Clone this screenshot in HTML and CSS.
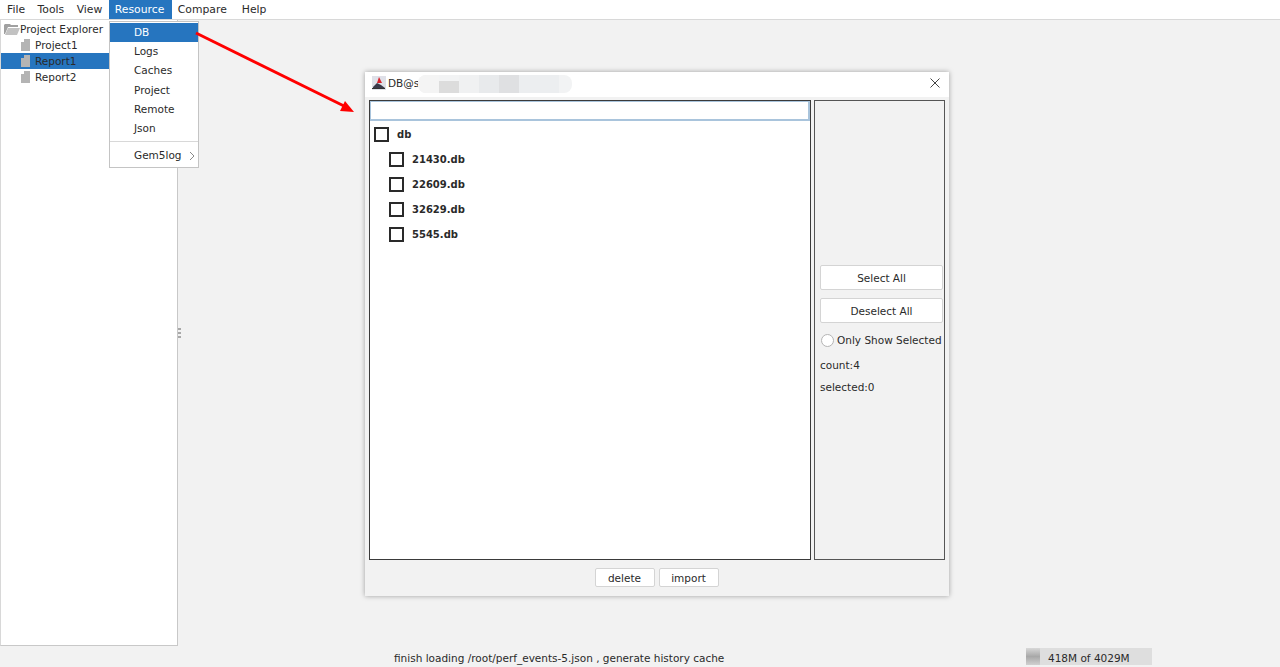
FILE: index.html
```html
<!DOCTYPE html>
<html lang="en">
<head>
    <meta charset="UTF-8">
    <title>Project Explorer</title>
    <link rel="stylesheet" href="styles.css">
</head>
<body>
<div class="menubar">
    <span class="menu-item">File</span>
    <span class="menu-item">Tools</span>
    <span class="menu-item">View</span>
    <span class="menu-item active">Resource</span>
    <span class="menu-item compare">Compare</span>
    <span class="menu-item">Help</span>
</div>

<div class="workspace">
    <div class="sidebar">
        <div class="tree-root">
            <svg class="folder-icon" width="16" height="11" viewBox="0 0 16 11"><path d="M0 1 L1 0 H6 L7 1 H14 V3 H4 L1 10 H0 Z" fill="#a0a0a0"/><path d="M4 4 H16 L13 11 H1 Z" fill="#c2c2c2"/></svg>
            <span>Project Explorer</span>
        </div>
        <div class="tree-item"><svg class="file-icon" width="9" height="12" viewBox="0 0 9 12"><path d="M3 0 H9 V12 H0 V3 H3 Z" fill="#b4b4b4"/></svg><span>Project1</span></div>
        <div class="tree-item selected"><svg class="file-icon" width="9" height="12" viewBox="0 0 9 12"><path d="M3 0 H9 V12 H0 V3 H3 Z" fill="#b4b4b4"/></svg><span>Report1</span></div>
        <div class="tree-item"><svg class="file-icon" width="9" height="12" viewBox="0 0 9 12"><path d="M3 0 H9 V12 H0 V3 H3 Z" fill="#b4b4b4"/></svg><span>Report2</span></div>
    </div>
    <div class="grip">
        <span class="grip-dot"></span>
        <span class="grip-dot"></span>
        <span class="grip-dot"></span>
    </div>
</div>

<div class="statusbar">
    <span class="status-text">finish loading /root/perf_events-5.json , generate history cache</span>
    <div class="memory">
        <span class="memory-used"></span>
        <span class="memory-text">418M of 4029M</span>
    </div>
</div>

<div class="dropdown">
    <div class="dropdown-item active">DB</div>
    <div class="dropdown-item">Logs</div>
    <div class="dropdown-item">Caches</div>
    <div class="dropdown-item">Project</div>
    <div class="dropdown-item">Remote</div>
    <div class="dropdown-item">Json</div>
    <div class="dropdown-sep"></div>
    <div class="dropdown-item submenu">
        <span>Gem5log</span>
        <svg width="6" height="10" viewBox="0 0 6 10"><path d="M1 1 L5 5 L1 9" fill="none" stroke="#8a8a8a" stroke-width="1"/></svg>
    </div>
</div>

<div class="window">
    <div class="titlebar">
        <svg class="app-icon" width="14" height="14" viewBox="0 0 14 14">
            <rect x="0" y="0" width="14" height="14" fill="#dfe0e8"/>
            <path d="M1 11 L5 7 L9 9 L13 12 L1 12 Z" fill="#3a3a4a"/>
            <path d="M7 1 L10 7 L5 7 Z" fill="#d8202a"/>
            <rect x="0" y="12" width="13" height="1" fill="#333"/>
        </svg>
        <span class="title-text">DB@s</span>
        <div class="blur-mask">
            <span class="blur-cell c1"></span>
            <span class="blur-cell c2"></span>
            <span class="blur-cell c3"></span>
            <span class="blur-cell c4"></span>
            <span class="blur-cell c5"></span>
            <span class="blur-cell c6"></span>
        </div>
        <svg class="close-icon" width="10" height="10" viewBox="0 0 10 10"><path d="M0.5 0.5 L9.5 9.5 M9.5 0.5 L0.5 9.5" stroke="#444" stroke-width="1" fill="none"/></svg>
    </div>
    <div class="window-body">
        <div class="panels">
            <div class="list-panel">
                <div class="search-box"></div>
                <div class="check-row root"><span class="checkbox"></span><span>db</span></div>
                <div class="check-row"><span class="checkbox"></span><span>21430.db</span></div>
                <div class="check-row"><span class="checkbox"></span><span>22609.db</span></div>
                <div class="check-row"><span class="checkbox"></span><span>32629.db</span></div>
                <div class="check-row"><span class="checkbox"></span><span>5545.db</span></div>
            </div>
            <div class="side-panel">
                <div class="btn side-btn">Select All</div>
                <div class="btn side-btn">Deselect All</div>
                <div class="radio-row"><span class="radio"></span><span>Only Show Selected</span></div>
                <div class="side-label">count:4</div>
                <div class="side-label">selected:0</div>
            </div>
        </div>
        <div class="actions">
            <div class="btn action-btn">delete</div>
            <div class="btn action-btn">import</div>
        </div>
    </div>
</div>

<svg class="arrow" width="170" height="90" viewBox="0 0 170 90">
    <line x1="2" y1="2" x2="150" y2="75" stroke="#ff0000" stroke-width="3"/>
    <polygon points="160,81 146,80 151,70" fill="#ff0000"/>
</svg>
</body>
</html>
```

FILE: styles.css
```css
* {
    box-sizing: border-box;
}
body {
    font-family: "DejaVu Sans", sans-serif;
    font-size: 10.5px;
    color: #2a2a2a;
    background-color: #f2f2f2;
    display: flex;
    flex-direction: column;
    height: 100vh;
    margin: 0;
    overflow: hidden;
}

.menubar {
    display: flex;
    height: 20px;
    flex-shrink: 0;
    background-color: #fff;
    border-bottom: 1px solid #d8d8d8;
    padding-left: 1px;
    font-size: 10.8px;
}
.menu-item {
    padding: 0 6.5px 0 6px;
    line-height: 19px;
    height: 19px;
}
.menu-item.active {
    padding-right: 7.5px;
    background-color: #2675bf;
    color: #fff;
}
.menu-item.compare {
    padding-right: 9px;
}

.workspace {
    flex: 1;
    display: flex;
    min-height: 0;
}
.sidebar {
    width: 178px;
    background-color: #fff;
    border-right: 1px solid #c8c8c8;
    border-bottom: 1px solid #c8c8c8;
    border-left: 1px solid #d8d8d8;
    padding-top: 1px;
}
.tree-root {
    display: flex;
    align-items: center;
    height: 16px;
    padding-left: 3px;
}
.tree-item {
    display: flex;
    align-items: center;
    height: 16px;
    padding-left: 20px;
    gap: 5px;
}
.tree-item.selected {
    background-color: #2675bf;
}
.grip {
    display: flex;
    flex-direction: column;
    justify-content: center;
    gap: 2px;
    height: 100%;
}
.grip-dot {
    width: 3px;
    height: 2px;
    background-color: #a8a8a8;
}

.statusbar {
    display: flex;
    height: 21px;
    flex-shrink: 0;
    align-items: center;
    padding-left: 394px;
}
.status-text {
    width: 632px;
    margin-top: 3px;
}
.memory {
    position: relative;
    display: flex;
    align-items: center;
    width: 126px;
    height: 17px;
    background-color: #dedede;
}
.memory-used {
    width: 14px;
    height: 17px;
    background: linear-gradient(#d8d8d8, #a8a8a8 50%, #d0d0d0);
}
.memory-text {
    margin-left: 8px;
    margin-top: 2px;
}

.dropdown {
    position: absolute;
    left: 109px;
    top: 21px;
    width: 90px;
    height: 147px;
    background-color: #fff;
    border: 1px solid #c4c4c4;
    padding-top: 1px;
}
.dropdown-item {
    height: 19.2px;
    line-height: 19px;
    padding-left: 24px;
}
.dropdown-item.active {
    background-color: #2675bf;
    color: #fff;
}
.dropdown-item.submenu {
    display: flex;
    align-items: center;
    justify-content: space-between;
    padding-right: 3px;
}
.dropdown-sep {
    height: 1px;
    background-color: #d8d8d8;
    margin: 3px 0 4px;
}

.window {
    position: absolute;
    left: 365px;
    top: 72px;
    width: 584px;
    height: 524px;
    background-color: #f2f2f2;
    box-shadow: 0 0 5px rgba(0, 0, 0, 0.35);
    display: flex;
    flex-direction: column;
}
.titlebar {
    position: relative;
    display: flex;
    align-items: center;
    height: 25px;
    flex-shrink: 0;
    background-color: #fff;
    padding: 0 0 4px 7px;
    gap: 2px;
}
.blur-mask {
    position: absolute;
    left: 53px;
    top: 3px;
    width: 154px;
    height: 18px;
    display: flex;
    background-color: #f2f3f4;
    border-radius: 8px;
    overflow: hidden;
}
.blur-cell {
    width: 20px;
    height: 100%;
}
.blur-cell.c1 {
    width: 21px;
    background-color: #f4f4f4;
}
.blur-cell.c2 {
    background-color: #dcdcdc;
    height: 12px;
    margin-top: 6px;
}
.blur-cell.c3 {
    background-color: #f0f1f2;
}
.blur-cell.c4 {
    background-color: #e8eaec;
}
.blur-cell.c5 {
    background-color: #dfe0e2;
}
.blur-cell.c6 {
    width: 40px;
    background-color: #eceef0;
}
.close-icon {
    position: absolute;
    right: 9px;
    top: 6px;
}

.window-body {
    flex: 1;
    display: flex;
    flex-direction: column;
    min-height: 0;
    padding: 3px 4px 0 4px;
}
.panels {
    flex: 1;
    display: flex;
    gap: 3px;
    min-height: 0;
}
.list-panel {
    width: 442px;
    flex-shrink: 0;
    background-color: #fff;
    border: 1px solid #3a3a3a;
}
.search-box {
    height: 20px;
    background-color: #fff;
    border: 2px solid #a9c4dc;
    border-top-width: 1px;
    border-left-width: 1px;
    margin-bottom: 1px;
}
.check-row {
    display: flex;
    align-items: center;
    height: 25px;
    padding-left: 19px;
    gap: 8px;
    font-size: 10px;
    font-weight: bold;
}
.check-row.root {
    padding-left: 4px;
}
.checkbox {
    width: 15px;
    height: 15px;
    border: 2px solid #2a2a2a;
    background-color: #fff;
}

.side-panel {
    flex: 1;
    min-width: 0;
    display: flex;
    flex-direction: column;
    border: 1px solid #555;
    padding: 164px 1px 0 5px;
}
.btn {
    display: flex;
    align-items: center;
    justify-content: center;
    background-color: #fff;
    border: 1px solid #d4d4d4;
    border-radius: 2px;
}
.side-btn {
    height: 25px;
    flex-shrink: 0;
    margin-bottom: 8px;
}
.radio-row {
    display: flex;
    align-items: center;
    gap: 3px;
    height: 18px;
    padding-left: 1px;
    white-space: nowrap;
}
.radio {
    width: 13px;
    height: 13px;
    border: 1px solid #b4b4b4;
    border-radius: 50%;
    background-color: #fff;
    flex-shrink: 0;
}
.side-label {
    height: 22px;
    line-height: 22px;
}
.radio-row + .side-label {
    margin-top: 5px;
}

.actions {
    display: flex;
    justify-content: center;
    align-items: flex-start;
    gap: 4px;
    height: 36px;
    padding: 8px 1px 0 0;
}
.action-btn {
    width: 60px;
    height: 19px;
}

.arrow {
    position: absolute;
    left: 194px;
    top: 31px;
}
```
